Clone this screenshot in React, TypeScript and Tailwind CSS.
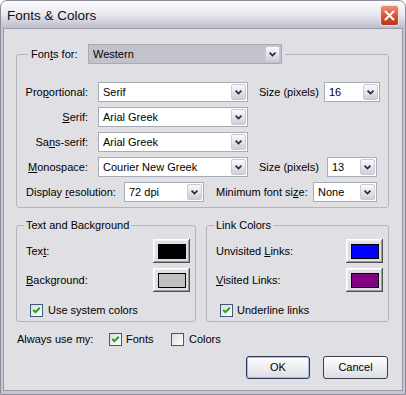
import type { ReactNode } from "react";

function Chevron() {
  return (
    <svg width="7" height="5" viewBox="0 0 7 5">
      <path d="M0.6 0.7 L3.5 3.6 L6.4 0.7" stroke="#262a3d" strokeWidth="1.7" fill="none" />
    </svg>
  );
}

function Combo({ value, className, gray }: { value: string; className: string; gray?: boolean }) {
  return (
    <div
      className={`flex h-[20px] shrink-0 items-stretch border border-[#a5acb5] ${className} ${
        gray ? "bg-[#c2c2cd]" : "bg-white"
      }`}
    >
      <span className="flex-1 truncate pl-[4px] leading-[18px]">{value}</span>
      <span className="m-[1px] flex w-[15px] items-center justify-center rounded-[2px] border border-[#cacad6] bg-gradient-to-b from-[#fafafc] to-[#cfcfdb]">
        <Chevron />
      </span>
    </div>
  );
}

function Check({ checked }: { checked?: boolean }) {
  return (
    <span className="flex h-[13px] w-[13px] shrink-0 items-center justify-center border border-[#3e5a78] bg-gradient-to-br from-[#dcdcd6] to-white">
      {checked && (
        <svg width="11" height="11" viewBox="0 0 11 11">
          <path d="M2.2 5 L4.4 7.2 L8.8 2.8" stroke="#21a121" strokeWidth="2" fill="none" />
        </svg>
      )}
    </span>
  );
}

function Swatch({ color }: { color: string }) {
  return (
    <div className="flex h-[24px] w-[37px] items-center justify-center bg-[#e0dfe3] shadow-[inset_-1px_-1px_#505050,inset_1px_1px_#ffffff,inset_-2px_-2px_#9a9aa2,inset_2px_2px_#f2f2f4]">
      <span className={`h-[15px] w-[28px] border border-black ${color}`} />
    </div>
  );
}

function Row({ children }: { children: ReactNode }) {
  return <div className="flex h-[20px] items-center">{children}</div>;
}

export default function App() {
  return (
    <div className="flex h-[395px] w-[406px] flex-col overflow-hidden rounded-t-[7px] border border-[#8c8c9c] bg-[#c6c6d3] font-['Liberation_Sans',Arial,sans-serif] text-[11px] leading-[13px] text-black">
      <div className="flex h-[27px] shrink-0 items-start justify-between bg-gradient-to-b from-[#fdfdfe] via-[#e8e8ef] to-[#bdbdcc] pl-[6px]">
        <span className="mt-[7px] text-[13.5px] leading-[15px] text-[#101010]">Fonts &amp; Colors</span>
        <span className="mr-[6px] mt-[4px] flex h-[21px] w-[19px] items-center justify-center rounded-[3px] border border-[#f3e1dc] bg-gradient-to-b from-[#e8917a] via-[#d4573a] to-[#b8361f]">
          <svg width="11" height="11" viewBox="0 0 11 11">
            <path d="M1.5 1.5 L9.5 9.5 M9.5 1.5 L1.5 9.5" stroke="white" strokeWidth="2" strokeLinecap="round" />
          </svg>
        </span>
      </div>

      <div className="flex flex-1 flex-col px-[2px] pb-[3px]">
        <div className="flex flex-1 flex-col border border-[#9a9aaa] bg-[#e0dfe3]">
          <fieldset className="ml-[12px] mt-[15px] w-[373px] rounded-[3px] border border-[#b4b4bf] pb-[5px] pl-[8px] pt-[18px]">
            <legend className="ml-[3px] flex items-center px-[3px]">
              <span className="w-[57px]">
                Fon<u>t</u>s for:
              </span>
              <Combo value="Western" className="w-[194px]" gray />
            </legend>
            <div className="flex flex-col gap-[5px]">
              <Row>
                <span className="w-[63px] text-right">
                  Pro<u>p</u>ortional:
                </span>
                <Combo value="Serif" className="ml-[10px] w-[150px]" />
                <span className="ml-[11px] w-[65px]">Size (pixels)</span>
                <Combo value="16" className="w-[56px]" />
              </Row>
              <Row>
                <span className="w-[63px] text-right">
                  <u>S</u>erif:
                </span>
                <Combo value="Arial Greek" className="ml-[10px] w-[150px]" />
              </Row>
              <Row>
                <span className="w-[63px] text-right">
                  Sa<u>n</u>s-serif:
                </span>
                <Combo value="Arial Greek" className="ml-[10px] w-[150px]" />
              </Row>
              <Row>
                <span className="w-[63px] text-right">
                  <u>M</u>onospace:
                </span>
                <Combo value="Courier New Greek" className="ml-[10px] w-[150px]" />
                <span className="ml-[11px] w-[68px]">Size (pixels)</span>
                <Combo value="13" className="w-[50px]" />
              </Row>
              <Row>
                <span className="ml-[1px] w-[98px]">
                  Display <u>r</u>esolution:
                </span>
                <Combo value="72 dpi" className="w-[80px]" />
                <span className="ml-[12px] w-[97px]">
                  Minimum font si<u>z</u>e:
                </span>
                <Combo value="None" className="w-[64px]" />
              </Row>
            </div>
          </fieldset>

          <div className="ml-[12px] mt-[11px] flex gap-[10px]">
            <fieldset className="w-[180px] rounded-[3px] border border-[#b4b4bf] pb-[4px] pl-[7px] pr-[5px] pt-[7px]">
              <legend className="px-[2px]">Text and Background</legend>
              <div className="flex flex-col">
                <div className="flex h-[24px] items-center justify-between pl-[2px]">
                  <span>
                    Tex<u>t</u>:
                  </span>
                  <Swatch color="bg-black" />
                </div>
                <div className="mt-[5px] flex h-[24px] items-center justify-between pl-[2px]">
                  <span>
                    <u>B</u>ackground:
                  </span>
                  <Swatch color="bg-[#c0c0c0]" />
                </div>
                <div className="mt-[12px] flex h-[13px] items-center gap-[5px] pl-[6px]">
                  <Check checked />
                  <span>Use system colors</span>
                </div>
              </div>
            </fieldset>
            <fieldset className="w-[183px] rounded-[3px] border border-[#b4b4bf] pb-[4px] pl-[7px] pr-[5px] pt-[7px]">
              <legend className="px-[2px]">Link Colors</legend>
              <div className="flex flex-col">
                <div className="flex h-[24px] items-center justify-between pl-[2px]">
                  <span>
                    Unvisited <u>L</u>inks:
                  </span>
                  <Swatch color="bg-[#0000ff]" />
                </div>
                <div className="mt-[5px] flex h-[24px] items-center justify-between pl-[2px]">
                  <span>
                    <u>V</u>isited Links:
                  </span>
                  <Swatch color="bg-[#800080]" />
                </div>
                <div className="mt-[12px] flex h-[13px] items-center gap-[4px] pl-[6px]">
                  <Check checked />
                  <span>Underline links</span>
                </div>
              </div>
            </fieldset>
          </div>

          <div className="ml-[13px] mt-[11px] flex h-[13px] items-center">
            <span className="w-[92px]">Always use my:</span>
            <div className="flex w-[62px] items-center gap-[4px]">
              <Check checked />
              <span>Fonts</span>
            </div>
            <div className="flex items-center gap-[5px]">
              <Check />
              <span>Colors</span>
            </div>
          </div>

          <div className="mr-[14px] mt-[10px] flex justify-end gap-[13px]">
            <button className="flex h-[23px] w-[64px] items-center justify-center rounded-[3px] border border-[#2c3a5c] bg-gradient-to-b from-white to-[#dcdce4] shadow-[inset_0_0_0_1px_#a9bde0]">
              OK
            </button>
            <button className="flex h-[23px] w-[65px] items-center justify-center rounded-[3px] border border-[#3a3d4c] bg-gradient-to-b from-white to-[#dcdce4]">
              Cancel
            </button>
          </div>
        </div>
      </div>
    </div>
  );
}
